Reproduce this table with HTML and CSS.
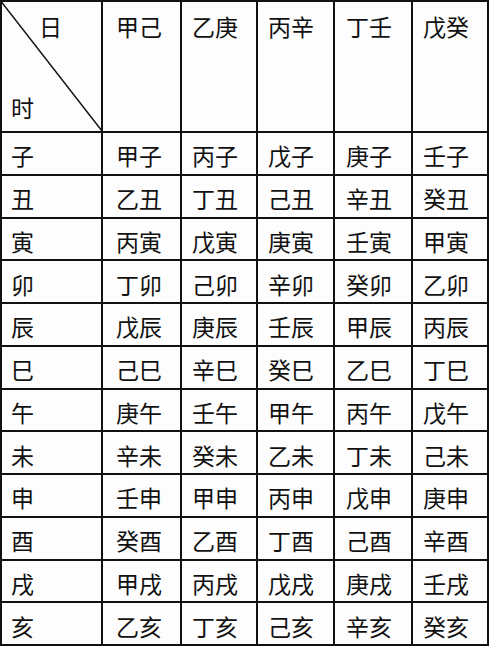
FILE: index.html
```html
<!DOCTYPE html>
<html lang="zh">
<head>
<meta charset="utf-8">
<title>日上起时表</title>
<link rel="stylesheet" href="styles.css">
</head>
<body>
<div class="table">
  <div class="cell head corner">
    <svg class="diag" viewBox="0 0 100 100" preserveAspectRatio="none"><line x1="0" y1="0" x2="100" y2="100" vector-effect="non-scaling-stroke"/></svg>
    <span class="ri">日</span>
    <span class="shi">时</span>
  </div>
  <div class="cell head c1">甲己</div>
  <div class="cell head c2">乙庚</div>
  <div class="cell head c3">丙辛</div>
  <div class="cell head c4">丁壬</div>
  <div class="cell head c5">戊癸</div>

  <div class="cell c0">子</div><div class="cell c1">甲子</div><div class="cell c2">丙子</div><div class="cell c3">戊子</div><div class="cell c4">庚子</div><div class="cell c5">壬子</div>
  <div class="cell c0">丑</div><div class="cell c1">乙丑</div><div class="cell c2">丁丑</div><div class="cell c3">己丑</div><div class="cell c4">辛丑</div><div class="cell c5">癸丑</div>
  <div class="cell c0">寅</div><div class="cell c1">丙寅</div><div class="cell c2">戊寅</div><div class="cell c3">庚寅</div><div class="cell c4">壬寅</div><div class="cell c5">甲寅</div>
  <div class="cell c0">卯</div><div class="cell c1">丁卯</div><div class="cell c2">己卯</div><div class="cell c3">辛卯</div><div class="cell c4">癸卯</div><div class="cell c5">乙卯</div>
  <div class="cell c0">辰</div><div class="cell c1">戊辰</div><div class="cell c2">庚辰</div><div class="cell c3">壬辰</div><div class="cell c4">甲辰</div><div class="cell c5">丙辰</div>
  <div class="cell c0">巳</div><div class="cell c1">己巳</div><div class="cell c2">辛巳</div><div class="cell c3">癸巳</div><div class="cell c4">乙巳</div><div class="cell c5">丁巳</div>
  <div class="cell c0">午</div><div class="cell c1">庚午</div><div class="cell c2">壬午</div><div class="cell c3">甲午</div><div class="cell c4">丙午</div><div class="cell c5">戊午</div>
  <div class="cell c0">未</div><div class="cell c1">辛未</div><div class="cell c2">癸未</div><div class="cell c3">乙未</div><div class="cell c4">丁未</div><div class="cell c5">己未</div>
  <div class="cell c0">申</div><div class="cell c1">壬申</div><div class="cell c2">甲申</div><div class="cell c3">丙申</div><div class="cell c4">戊申</div><div class="cell c5">庚申</div>
  <div class="cell c0">酉</div><div class="cell c1">癸酉</div><div class="cell c2">乙酉</div><div class="cell c3">丁酉</div><div class="cell c4">己酉</div><div class="cell c5">辛酉</div>
  <div class="cell c0">戌</div><div class="cell c1">甲戌</div><div class="cell c2">丙戌</div><div class="cell c3">戊戌</div><div class="cell c4">庚戌</div><div class="cell c5">壬戌</div>
  <div class="cell c0">亥</div><div class="cell c1">乙亥</div><div class="cell c2">丁亥</div><div class="cell c3">己亥</div><div class="cell c4">辛亥</div><div class="cell c5">癸亥</div>
</div>
</body>
</html>
```

FILE: styles.css
```css
html, body {
  margin: 0;
  padding: 0;
  background: #ffffff;
}

body {
  font-family: "Noto Sans CJK SC", "Noto Sans CJK TC", sans-serif;
  color: #111;
}

.table {
  display: grid;
  grid-template-columns: 99px 77px 74px 75px 76px 74px;
  grid-template-rows: 129px repeat(12, 1fr);
  gap: 2px;
  padding: 2px;
  width: 489px;
  height: 646px;
  box-sizing: border-box;
  background: #111;
}

.cell {
  background: #fdfdfd;
  font-size: 23px;
  line-height: 1;
  display: flex;
  align-items: center;
  padding-top: 5px;
  box-sizing: border-box;
  white-space: nowrap;
}

.head {
  align-items: flex-start;
  padding-top: 13px;
}

.corner {
  position: relative;
  flex-direction: column;
  justify-content: space-between;
  padding: 13px 0 12px 0;
}

.diag {
  position: absolute;
  left: -2px;
  top: -2px;
  width: calc(100% + 3px);
  height: calc(100% + 2px);
  overflow: visible;
}

.diag line {
  stroke: #111;
  stroke-width: 1.4;
}

.ri {
  padding-left: 37px;
}

.shi {
  padding-left: 9px;
}

.c0 { padding-left: 9px; }
.c1 { padding-left: 13px; }
.c2 { padding-left: 10px; }
.c3 { padding-left: 10px; }
.c4 { padding-left: 11px; }
.c5 { padding-left: 10px; }
```
